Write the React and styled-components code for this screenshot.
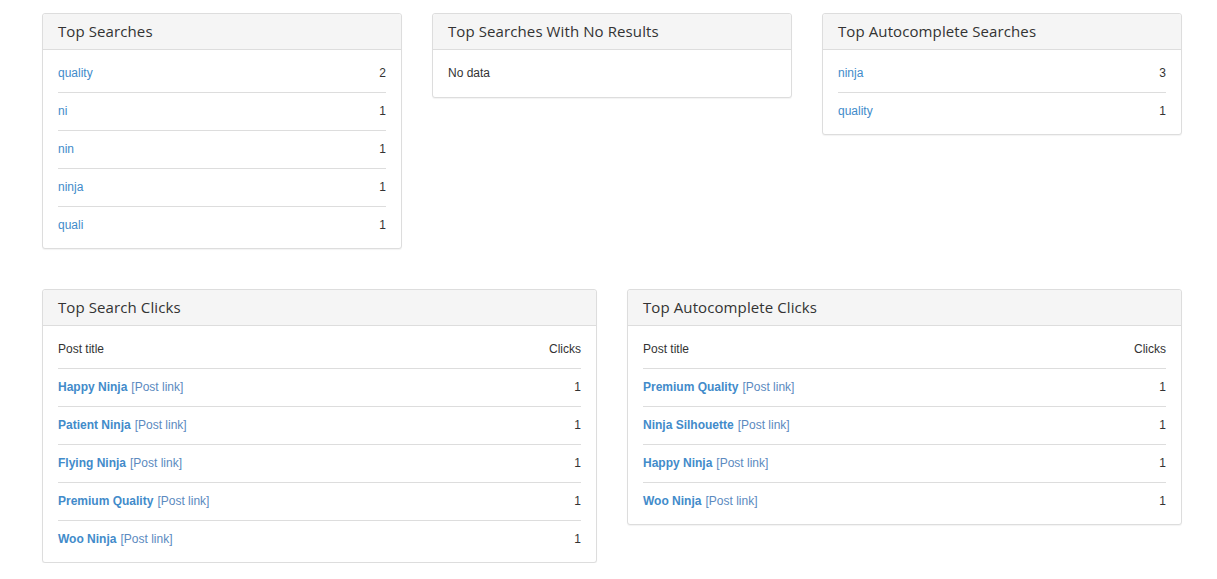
import React from "react";
import styled, { createGlobalStyle } from "styled-components";

const Global = createGlobalStyle`
  body {
    margin: 0;
    background: #fff;
    font-family: "Liberation Sans", Arial, sans-serif;
    font-size: 12px;
    color: #333;
  }
`;

const Page = styled.div`
  width: 1140px;
  padding: 13px 0 0 42px;
  display: flex;
  flex-direction: column;
  gap: 40px;
`;

const Row = styled.div`
  display: grid;
  grid-template-columns: repeat(${(p) => p.cols}, 1fr);
  column-gap: 30px;
  align-items: start;
`;

const Panel = styled.div`
  border: 1px solid #ddd;
  border-radius: 3px;
  background: #fff;
  box-shadow: 0 1px 1px rgba(0, 0, 0, 0.05);
`;

const Heading = styled.div`
  height: 36px;
  box-sizing: border-box;
  display: flex;
  align-items: center;
  padding: 0 15px 1px;
  background: #f5f5f5;
  border-bottom: 1px solid #ddd;
  border-radius: 3px 3px 0 0;
  font-family: "Open Sans", sans-serif;
  font-size: 15px;
  letter-spacing: 0.1px;
  color: #333;
`;

const Body = styled.div`
  padding: ${(p) => (p.empty ? "15px" : "4px 15px 4px")};
  line-height: 17px;
`;

const Line = styled.div`
  display: flex;
  justify-content: space-between;
  align-items: center;
  height: 38px;
  box-sizing: border-box;
  & + & {
    border-top: 1px solid #ddd;
  }
`;

const Term = styled.a`
  color: #428bca;
  text-decoration: none;
`;

const Title = styled.a`
  color: #428bca;
  font-weight: bold;
  text-decoration: none;
`;

const PostLink = styled.a`
  color: #5b8ac0;
  margin-left: 4px;
  text-decoration: none;
`;

const Count = styled.span`
  color: #333;
`;

const Head = styled.span`
  color: #333;
`;

const ListPanel = ({ title, items }) => (
  <Panel>
    <Heading>{title}</Heading>
    {items.length === 0 ? (
      <Body empty>No data</Body>
    ) : (
      <Body>
        {items.map(([t, n]) => (
          <Line key={t}>
            <Term href="#">{t}</Term>
            <Count>{n}</Count>
          </Line>
        ))}
      </Body>
    )}
  </Panel>
);

const ClickPanel = ({ title, items }) => (
  <Panel>
    <Heading>{title}</Heading>
    <Body>
      <Line>
        <Head>Post title</Head>
        <Head>Clicks</Head>
      </Line>
      {items.map(([t, n]) => (
        <Line key={t}>
          <span>
            <Title href="#">{t}</Title>
            <PostLink href="#">[Post link]</PostLink>
          </span>
          <Count>{n}</Count>
        </Line>
      ))}
    </Body>
  </Panel>
);

export default function App() {
  return (
    <>
      <Global />
      <Page>
        <Row cols={3}>
          <ListPanel
            title="Top Searches"
            items={[
              ["quality", 2],
              ["ni", 1],
              ["nin", 1],
              ["ninja", 1],
              ["quali", 1],
            ]}
          />
          <ListPanel title="Top Searches With No Results" items={[]} />
          <ListPanel
            title="Top Autocomplete Searches"
            items={[
              ["ninja", 3],
              ["quality", 1],
            ]}
          />
        </Row>
        <Row cols={2}>
          <ClickPanel
            title="Top Search Clicks"
            items={[
              ["Happy Ninja", 1],
              ["Patient Ninja", 1],
              ["Flying Ninja", 1],
              ["Premium Quality", 1],
              ["Woo Ninja", 1],
            ]}
          />
          <ClickPanel
            title="Top Autocomplete Clicks"
            items={[
              ["Premium Quality", 1],
              ["Ninja Silhouette", 1],
              ["Happy Ninja", 1],
              ["Woo Ninja", 1],
            ]}
          />
        </Row>
      </Page>
    </>
  );
}
